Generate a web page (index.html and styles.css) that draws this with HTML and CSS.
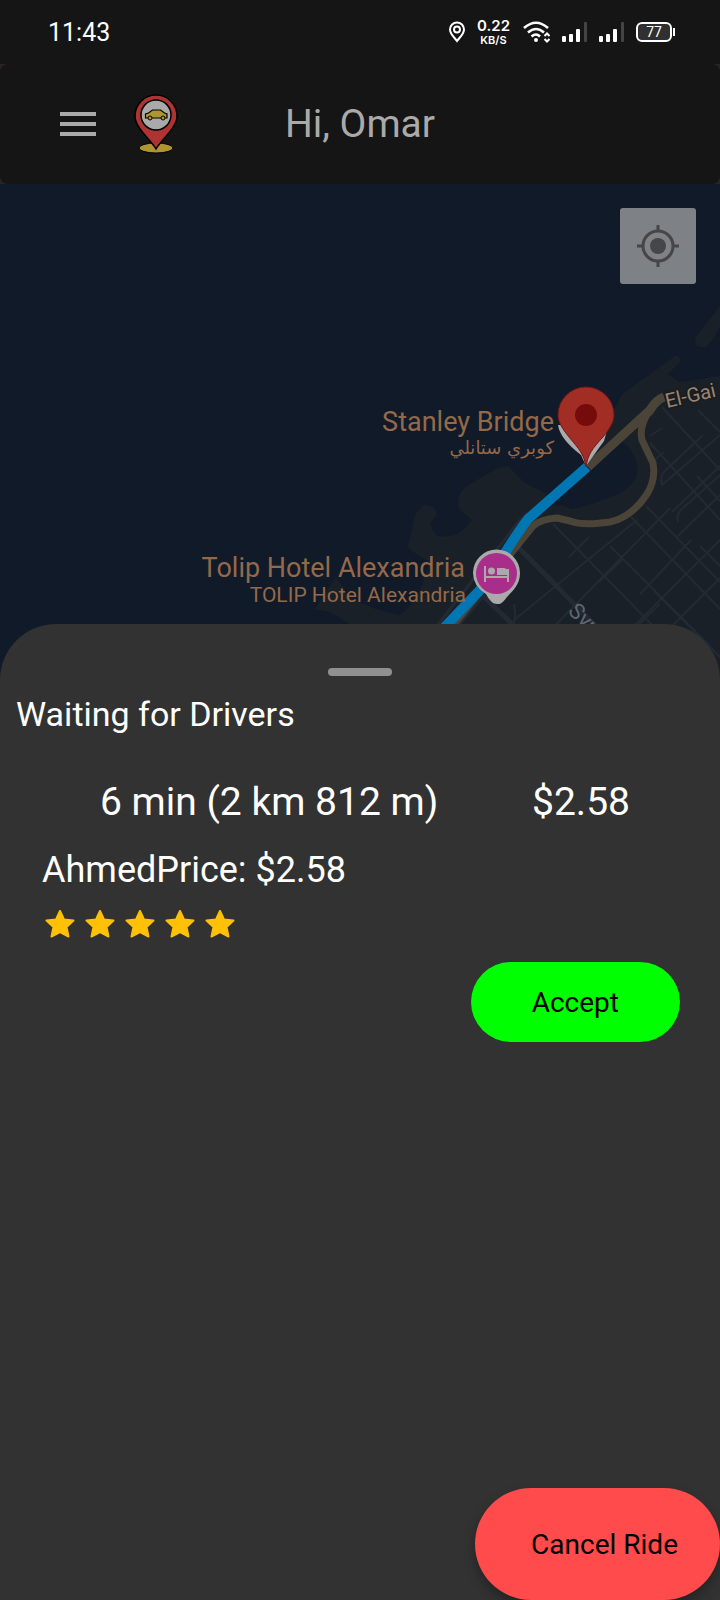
FILE: index.html
```html
<!DOCTYPE html>
<html lang="en">
<head>
<meta charset="utf-8">
<meta name="viewport" content="width=device-width, initial-scale=1">
<title>Waiting for Drivers</title>
<link rel="stylesheet" href="styles.css">
</head>
<body>
<div class="app">
  <div class="status">
    <time class="clock">11:43</time>
    <div class="indicators">
      <svg width="18" height="22" viewBox="0 0 18 22" fill="none" stroke="#fff" stroke-width="2"><path d="M9 20C6 16 2 13 2 8.500a7 7 0 0 1 14 0C16 13 12 16 9 20Z"/><circle cx="9" cy="8.500" r="3"/></svg>
      <div class="speed"><span class="rate">0.22</span><span class="unit">KB/S</span></div>
      <svg class="wifi" width="28" height="22" viewBox="0 0 28 22" fill="none" stroke="#fff" stroke-width="2.600"><path d="M1 7Q13-3.500 25 7M5 11.500Q13 4.500 21 11.500M8.500 15.500Q13 11.500 17 15.500"/><circle cx="13" cy="19" r="2" fill="#fff" stroke="none"/><path d="m21.500 15 2.500-2.500 2.500 2.500m-5 3 2.500 2.500 2.500-2.500" stroke-width="2"/></svg>
      <svg width="26" height="20" viewBox="0 0 26 20" fill="#fff"><rect y="14" width="4" height="6" rx="1"/><rect x="7" y="12" width="4" height="8" rx="1"/><rect x="14" y="7" width="4" height="13" rx="1"/><rect x="22" width="3" height="20" rx="1" fill="#444"/></svg>
      <svg width="26" height="20" viewBox="0 0 26 20" fill="#fff"><rect y="14" width="4" height="6" rx="1"/><rect x="7" y="12" width="4" height="8" rx="1"/><rect x="14" y="7" width="4" height="13" rx="1"/><rect x="22" width="3" height="20" rx="1" fill="#444"/></svg>
      <div class="battery">77</div>
    </div>
  </div>

  <div class="header-wrap">
    <header class="header">
      <button class="menu" aria-label="Menu"><svg width="36" height="24" viewBox="0 0 36 24" fill="#aaa"><path d="M0 0h36v4H0zM0 10h36v4H0zM0 20h36v4H0z"/></svg></button>
      <svg class="logo" width="44" height="60" viewBox="0 0 44 60" stroke="#000">
        <ellipse cx="22" cy="54" rx="17" ry="5" fill="#ae9533"/>
        <path d="M22 55C17 46 1 34 1 22a21 21 0 0 1 42 0C43 34 27 46 22 55Z" fill="#ae3333" stroke-width="1.500"/>
        <circle cx="22" cy="21" r="15" fill="#aaa" stroke-width="1.500"/>
        <path d="M11.500 24v-4l3-1 4-3h8l4 3 2.500 1v4Z" fill="#ae9533" stroke-width="1.200"/>
        <circle cx="16" cy="24" r="2" fill="#ae9533"/><circle cx="29" cy="24" r="2" fill="#ae9533"/>
      </svg>
      <h1 class="greeting">Hi, Omar</h1>
    </header>
  </div>

  <main class="map">
    <svg class="map-art" viewBox="0 184 720 500" preserveAspectRatio="xMaxYMin slice">
      <rect y="184" width="720" height="500" fill="#111a28"/>
      <g fill="#192027">
        <path d="M720 306 695 338Q694 349 705 347 711 344 720 326Z"/>
        <path d="M720 376 680 382 668 374 680 362Q680 354 675 356L622 394 587 465 595 462 620 441Q636 448 634 469 631 484 618 492L592 502Q576 511 568 507L540 490 525 483 508 466 496 469 465 487Q455 498 460 510L472 520 462 531Q448 540 436 535L430 524 437 515Q436 505 424 505 414 511 413 525L408 547Q411 552 430 562L420 590Q410 608 400 615 370 609 349 597L336 577 326 592 315 609 330 612 350 624V684H720Z"/>
      </g>
      <path d="M635 424 595 463 536 512Q553 500 572 509L592 504 618 494Q645 480 635 457 626 445 612 444Z" fill="#111a28"/>
      <g fill="none" stroke="#242a34" stroke-width="2">
        <path d="m662 407 58 63M698 410l22 22M650 443l70 77M697 476l23 25M646 506l74 76M631 517l89 92M553 524l167 170M610 546l100 100M700 546l20 20M655 592l65 65"/>
        <path d="m720 435-58 50q-3-10 5-16l36-34M720 466l-48 46M720 495l-43 42M678 522q-2-9 5-14l37-33M720 540l-125 125M720 578l-105 105M670 508 533 648M637 520 514 620M589 537l-20 20M691 540 640 594M622 560l-23 22M660 604l-50 48M650 436l12-8M664 452l-12 10M514 604q4 22-8 40"/>
        <path d="m518 547 64 65 70 72M476 589l70 68" stroke-width="5"/>
        <path d="M432 632 509 534q12-18 25-24M453 632l38-45" stroke-width="3"/>
      </g>
      <g fill="none" stroke="#4b4439" stroke-linejoin="round" stroke-width="9">
        <path d="M664 397Q656 400 650 412L590 465M648 413Q639 427 642 440L653 463Q656 480 647 494 632 517 610 522 582 526 570 521L557 518Q541 519 533 526L512 552 448 632" stroke-width="7"/>
        <path d="M664 397Q656 400 650 410L588 467"/>
      </g>
      <path d="M587 467 528 519Q518 532 505 553L480 590 440 632" fill="none" stroke="#0077b3" stroke-width="10" stroke-linejoin="round"/>

      <path d="M558 425Q560 439 581 455L586 466 604 441 608 427Z" fill="#aaa"/>
      <path d="M586 467C584 454 579 449 569 437 561 427 558 421 558 415a28 28 0 0 1 56 0C614 421 611 427 603 437 592 449 588 454 586 467Z" fill="#a12d25" stroke="#751816"/>
      <circle cx="586" cy="415" r="11" fill="#760b0b"/>

      <path d="M497 604Q491 604 486 594 473 586 473 573a23.500 23.500 0 0 1 47 0C520 586 511 592 507 597 502 604 500 604 497 604Z" fill="#aaa"/>
      <circle cx="496.500" cy="573.500" r="20.500" fill="#a92e8b"/>
      <g fill="#aaa"><path d="M484 566h2v10h21v-7h2v13h-2v-4h-21v4h-2Z"/><circle cx="491.500" cy="571" r="3.500"/><path d="M497 568h7q5 1 5 7h-12Z"/></g>

      <g class="place" text-anchor="end">
        <text x="554" y="431" font-size="27">Stanley Bridge</text>
        <text x="554" y="454" font-size="18" class="arabic" text-anchor="start" direction="rtl">كوبري ستانلي</text>
        <text x="465" y="577" font-size="27">Tolip Hotel Alexandria</text>
        <text x="466" y="602" font-size="21">TOLIP Hotel Alexandria</text>
      </g>
      <text class="road" x="667" y="408" transform="rotate(-13 667 408)">El-Gai</text>
      <text class="street" x="567" y="612" transform="rotate(45 567 612)">Syria</text>
    </svg>
    <button class="locate" aria-label="My location"><svg width="42" height="42" viewBox="0 0 42 42" fill="none" stroke="#454647" stroke-width="3"><circle cx="21" cy="21" r="15"/><circle cx="21" cy="21" r="8" fill="#454647" stroke="none"/><path d="M21 0v6M21 36v6M0 21h6M36 21h6"/></svg></button>
  </main>

  <section class="sheet">
    <div class="handle"></div>
    <h2 class="title">Waiting for Drivers</h2>
    <div class="trip"><span>6 min (2 km 812 m)</span><span>$2.58</span></div>
    <article class="offer">
      <p class="driver">AhmedPrice: $2.58</p>
      <svg class="stars" role="img" aria-label="5 stars" width="190" height="28" viewBox="0 0 190 28" fill="#ffc107" stroke="#ffc107" stroke-width="2" stroke-linejoin="round">
        <defs><path id="star" d="m15 1 4 8.500 9.500 1-7 6.500 2 9.500L15 22l-8.500 4.500 2-9.500-7-6.500 9.500-1Z"/></defs>
        <use href="#star"/><use href="#star" x="40"/><use href="#star" x="80"/><use href="#star" x="120"/><use href="#star" x="160"/>
      </svg>
      <button class="btn accept">Accept</button>
    </article>
    <button class="btn cancel">Cancel Ride</button>
  </section>
</div>
</body>
</html>
```
FILE: styles.css
```css
* { box-sizing: border-box; }

body {
  margin: 0;
  background: #323232;
  font-family: Roboto, "Open Sans", sans-serif;
}

h1, h2, p { margin: 0; font-weight: 400; }

button {
  border: 0;
  padding: 0;
  font-family: inherit;
  cursor: pointer;
}

svg { display: block; }

.app {
  display: flex;
  flex-direction: column;
  min-height: 100vh;
  overflow: hidden;
}

.status {
  display: flex;
  align-items: center;
  justify-content: space-between;
  height: 64px;
  padding: 0 46px 0 48px;
  background: #151515;
  color: #fff;
}

.clock { font-size: 25px; }

.indicators { display: flex; align-items: center; gap: 11px; }

.speed {
  display: flex;
  flex-direction: column;
  align-items: center;
  font-family: Inter, sans-serif;
  font-weight: 600;
}

.rate { font-size: 15px; line-height: 16px; }
.unit { font-size: 11px; line-height: 12px; }
.wifi { margin-left: 2px; }

.battery {
  position: relative;
  width: 36px;
  height: 20px;
  margin-right: 2px;
  border: 2px solid #fff;
  border-radius: 6px;
  background: #303030;
  font-size: 14px;
  line-height: 16px;
  text-align: center;
}

.battery::after {
  content: "";
  position: absolute;
  top: 4px;
  right: -5px;
  width: 2px;
  height: 8px;
  background: #fff;
}

.header-wrap { background: #2a2322; }

.header {
  display: grid;
  grid-template-columns: 1fr auto 1fr;
  align-items: center;
  height: 120px;
  padding: 0 60px;
  border-radius: 8px;
  background: #151515;
}

.menu, .logo, .greeting { grid-row: 1; }
.menu { grid-column: 1; justify-self: start; background: none; }
.logo { grid-column: 1; margin-left: 74px; }
.greeting { grid-column: 2; font-size: 39px; line-height: 48px; color: #aaa; }

.map { position: relative; height: 500px; }
.map-art { width: 100%; height: 100%; }
.place { fill: #94694a; }
.arabic { font-family: "DejaVu Sans", sans-serif; }
.road { fill: #998672; font-size: 20px; stroke: #1a1c20; stroke-width: 3px; paint-order: stroke; }
.street { fill: #5f666f; font-size: 22px; }

.locate {
  position: absolute;
  top: 24px;
  right: 24px;
  display: grid;
  place-items: center;
  width: 76px;
  height: 76px;
  border-radius: 3px;
  background: #7e8186;
}

.sheet {
  position: relative;
  flex: 1;
  display: flex;
  flex-direction: column;
  margin-top: -60px;
  padding-top: 44px;
  border-radius: 56px 56px 0 0;
  background: #323232;
  color: #fff;
}

.handle {
  align-self: center;
  width: 64px;
  height: 8px;
  border-radius: 4px;
  background: #909090;
}

.title {
  padding: 16px 16px 0;
  font-size: 34px;
  line-height: 44px;
}

.trip {
  display: flex;
  justify-content: space-between;
  padding: 42px 90px 0 100px;
  font-size: 39px;
  line-height: 48px;
}

.offer {
  display: flex;
  flex-direction: column;
  padding: 20px 40px 20px 42px;
}

.driver { font-size: 36px; line-height: 48px; }
.stars { margin: 16px 3px 0; }

.btn { font-size: 28px; color: #000; }

.accept {
  align-self: flex-end;
  height: 80px;
  margin-top: 24px;
  padding: 0 61px;
  border-radius: 40px;
  background: #0f0;
}

.cancel {
  align-self: flex-end;
  height: 112px;
  margin-top: auto;
  padding: 0 42px 0 56px;
  border-radius: 56px;
  background: #ff4b4b;
  box-shadow: 0 6px 12px rgba(0, 0, 0, 0.3);
}
```
